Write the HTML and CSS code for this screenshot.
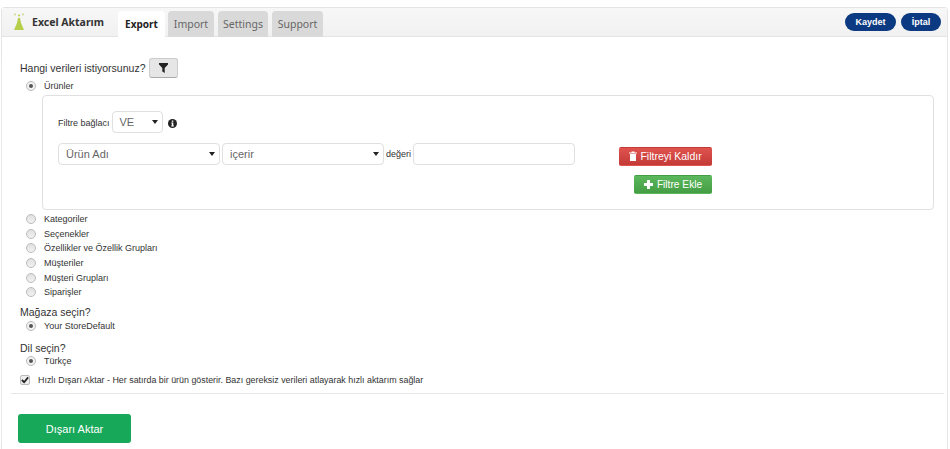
FILE: index.html
```html
<!DOCTYPE html>
<html lang="tr">
<head>
<meta charset="utf-8">
<title>Excel Aktarım</title>
<link rel="stylesheet" href="styles.css">
</head>
<body>
<div class="panel">
  <header class="head">
    <div class="brand">
      <svg class="logo" width="14" height="20" viewBox="0 0 14 20"><path d="M6 6h2l1 5 3 7H2l3-7z" fill="#b5cf4a"/><circle cx="3" cy="2.500" r="1" fill="#c9d98a"/><circle cx="11" cy="2.500" r="1" fill="#c9d98a"/><circle cx="7" cy="3.500" r="1" fill="#b5cf4a"/></svg>
      <span class="brand-name">Excel Aktarım</span>
    </div>
    <nav class="tabs">
      <a class="tab active t-export">Export</a>
      <a class="tab t-import">Import</a>
      <a class="tab t-settings">Settings</a>
      <a class="tab t-support">Support</a>
    </nav>
    <div class="actions">
      <button class="pill pill-save">Kaydet</button>
      <button class="pill pill-cancel">İptal</button>
    </div>
  </header>
  <main class="content">
    <div class="q q-first">
      <span>Hangi verileri istiyorsunuz?</span>
      <button class="filter-toggle"><svg width="9" height="10" viewBox="0 0 9 10"><path d="M0 0h9v1.500L5.700 5v5L3.300 8.500V5L0 1.500z" fill="#222"/></svg></button>
    </div>
    <label class="opt opt-first"><span class="radio on"></span>Ürünler</label>
    <section class="filter-box">
      <div class="row-a">
        <span class="lbl">Filtre bağlacı</span>
        <div class="sel sel-ve">VE<i class="caret"></i></div>
        <svg class="info" width="9" height="9" viewBox="0 0 9 9"><circle cx="4.500" cy="4.500" r="4.500" fill="#222"/><rect x="3.800" y="1.500" width="1.500" height="1.300" fill="#fff"/><path d="M3.300 3.600h2v3h.6v.9H3.200v-.9h.6V4.500h-.5z" fill="#fff"/></svg>
      </div>
      <div class="row-b">
        <div class="fields">
          <div class="sel sel-field">Ürün Adı<i class="caret"></i></div>
          <div class="sel sel-op">içerir<i class="caret"></i></div>
          <span class="lbl">değeri</span>
          <div class="txt"></div>
        </div>
        <div class="btns">
          <button class="btn btn-red"><svg width="8" height="10" viewBox="0 0 8 10"><path d="M0 1.500h2.500V.5h3v1H8v1H0zM1 3h6v7H1z" fill="#fff"/></svg>Filtreyi Kaldır</button>
          <button class="btn btn-green"><svg width="9" height="9" viewBox="0 0 9 9"><path d="M3 0h3v3h3v3H6v3H3V6H0V3h3z" fill="#fff"/></svg>Filtre Ekle</button>
        </div>
      </div>
    </section>
    <label class="opt"><span class="radio"></span>Kategoriler</label>
    <label class="opt"><span class="radio"></span>Seçenekler</label>
    <label class="opt"><span class="radio"></span>Özellikler ve Özellik Grupları</label>
    <label class="opt"><span class="radio"></span>Müşteriler</label>
    <label class="opt"><span class="radio"></span>Müşteri Grupları</label>
    <label class="opt"><span class="radio"></span>Siparişler</label>
    <div class="q q-store">Mağaza seçin?</div>
    <label class="opt"><span class="radio on"></span>Your StoreDefault</label>
    <div class="q q-lang">Dil seçin?</div>
    <label class="opt"><span class="radio on"></span>Türkçe</label>
    <label class="check">
      <span class="box"><svg width="9" height="8" viewBox="0 0 9 8"><path d="M1 4l2.500 2.500L8 1" fill="none" stroke="#222" stroke-width="2"/></svg></span>
      Hızlı Dışarı Aktar - Her satırda bir ürün gösterir. Bazı gereksiz verileri atlayarak hızlı aktarım sağlar
    </label>
    <hr class="rule">
    <button class="export">Dışarı Aktar</button>
  </main>
</div>
</body>
</html>
```
FILE: styles.css
```css
* { box-sizing: border-box; }
html, body { margin: 0; padding: 0; height: 100%; background: #fff; overflow: hidden; }
body { font-family: "Liberation Sans", Arial, sans-serif; color: #333; padding: 7px 2px 0 1px; }
button { font-family: inherit; cursor: pointer; }

.panel { border: 1px solid #e4e4e4; border-bottom: 0; border-radius: 4px 4px 0 0; height: 442px; }
.head { height: 29px; display: flex; align-items: flex-end; background: linear-gradient(#f7f7f7, #f1f1f1); border-bottom: 1px solid #e4e4e4; }
.brand { display: flex; align-items: center; width: 116px; height: 29px; padding-left: 10px; }
.logo { margin-right: 6px; }
.brand-name { font-family: "Noto Sans", sans-serif; font-weight: 700; font-size: 10.500px; color: #333; }
.tabs { display: flex; gap: 3px; align-self: flex-end; margin-bottom: -1px; }
.tab { font-family: "Noto Sans", sans-serif; font-size: 10.500px; height: 26px; line-height: 26px; text-align: center; background: #d9d9d9; color: #666; border-radius: 4px 4px 0 0; }
.tab.active { background: #fff; color: #222; font-weight: 700; font-size: 10px; }
.t-export { width: 47px; }
.t-import { width: 46px; margin-right: 1px; }
.t-settings { width: 50px; margin-right: 1px; }
.t-support { width: 51px; }
.actions { margin-left: auto; align-self: center; display: flex; gap: 5px; padding-right: 6px; }
.pill { height: 18px; border: 0; border-radius: 9px; background: #0b3a82; color: #fff; font-size: 9px; font-weight: 700; padding: 0; }
.pill-save { width: 51px; }
.pill-cancel { width: 40px; }

.content { padding: 0 0 0 18px; border-left: 1px solid #e8e8e8; margin-left: -1px; }
.q { font-size: 10.500px; color: #333; line-height: 14px; }
.q-first { display: flex; align-items: center; gap: 4px; margin-top: 21px; height: 20px; }
.filter-toggle { width: 29px; height: 20px; border: 1px solid #ccc; border-bottom-color: #aaa; border-radius: 3px; background: #e6e6e6; display: flex; align-items: center; justify-content: center; padding: 0; }
.q-store { margin-top: 5px; height: 14px; }
.q-lang { margin-top: 7px; height: 13px; }

.opt { display: flex; align-items: center; height: 14.700px; font-size: 9px; color: #333; padding-left: 6px; }
.opt-first { height: 15.700px; padding-top: 1px; }
.radio { width: 10px; height: 10px; border-radius: 50%; border: 1px solid #bbb; background: linear-gradient(#e0e0e0, #f2f2f2); margin-right: 8px; flex: none; position: relative; }
.radio.on { background: #f2f2f2; }
.radio.on::after { content: ""; position: absolute; left: 2px; top: 2px; width: 4px; height: 4px; border-radius: 50%; background: #555; }

.filter-box { margin: 1px 13px 2px 22px; height: 115px; border: 1px solid #e0e0e0; border-radius: 4px; padding: 15px 15px 0; }
.row-a { display: flex; align-items: center; gap: 2px; height: 23px; }
.lbl { font-size: 9px; color: #333; padding-top: 1px; }
.info { margin-left: 3px; margin-top: 2px; }
.sel { position: relative; height: 22px; line-height: 20px; border: 1px solid #e0e0e0; border-radius: 4px; font-size: 11px; color: #666; padding-left: 7px; background: #fff; }
.sel-ve { width: 51px; }
.sel-field { width: 162px; }
.sel-op { width: 162px; }
.caret { position: absolute; right: 4px; top: 8px; width: 0; height: 0; border: 3px solid transparent; border-top: 4px solid #222; border-bottom: 0; }
.row-b { display: flex; margin-top: 9px; }
.fields { display: flex; align-items: flex-start; gap: 2px; }
.fields .lbl { line-height: 21px; }
.txt { width: 162px; height: 22px; border: 1px solid #e0e0e0; border-radius: 4px; }
.btns { display: flex; flex-direction: column; align-items: flex-end; gap: 9px; margin-left: 44px; padding-top: 4px; }
.btn { display: flex; align-items: center; justify-content: center; gap: 3px; height: 19px; border: 1px solid transparent; border-radius: 2px; color: #fff; font-size: 10.500px; padding: 0; }
.btn-red { width: 93px; background: linear-gradient(#e0534f, #c33a36); }
.btn-green { width: 78px; gap: 4px; background: linear-gradient(#5cb85c, #449d44); font-size: 10.200px; }

.check { display: flex; align-items: center; gap: 8px; font-size: 8.900px; color: #333; margin-top: 4px; height: 15px; }
.box { width: 10px; height: 10px; border: 1px solid #bbb; border-radius: 2px; background: #eee; display: flex; align-items: center; justify-content: center; }
.rule { border: 0; border-top: 1px solid #e6e6e6; margin: 6px 3px 0 -9px; }
.export { display: block; margin: 20px 0 0 -2px; width: 113px; height: 29px; border: 0; border-radius: 3px; background: #17a85a; color: #fff; font-size: 11px; }
```
